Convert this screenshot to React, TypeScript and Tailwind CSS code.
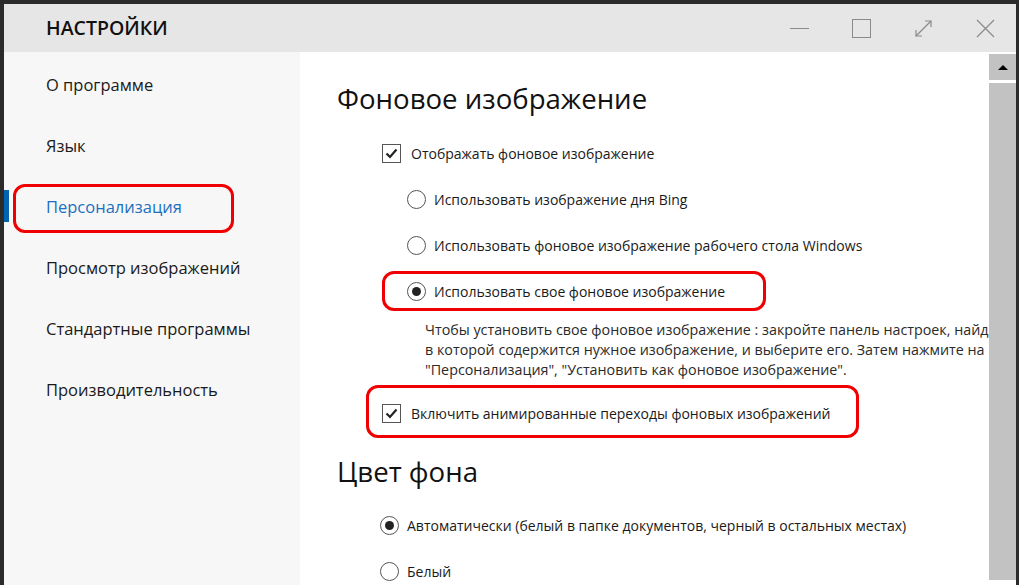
import React from "react";

const Check = () => (
  <div className="w-[19px] h-[19px] border border-[#555] bg-white flex items-center justify-center shrink-0">
    <svg width="13" height="11" viewBox="0 0 13 11">
      <path d="M1.5 5.5 L5 9 L11.5 1.5" fill="none" stroke="#222" strokeWidth="2.2" />
    </svg>
  </div>
);

const Radio = ({ on }: { on?: boolean }) => (
  <div className="w-[19px] h-[19px] rounded-full border border-[#555] bg-white flex items-center justify-center shrink-0">
    {on && <div className="w-[9px] h-[9px] rounded-full bg-[#222]" />}
  </div>
);

const sideItems = [
  "О программе",
  "Язык",
  "Персонализация",
  "Просмотр изображений",
  "Стандартные программы",
  "Производительность",
];

export default function App() {
  return (
    <div className="relative w-[1019px] h-[585px] overflow-hidden bg-[#2b2b2b] pt-[4px] pl-[4px] pr-[3px] flex flex-col font-['Open_Sans',sans-serif] text-[#1a1a1a]">
      {/* title bar */}
      <div className="h-[48px] bg-[#e6e6e6] flex items-center shrink-0">
        <div className="pl-[42px] text-[19.5px] font-semibold text-[#111] flex-1">НАСТРОЙКИ</div>
        <div className="flex h-full">
          <div className="w-[62px] flex items-center justify-center">
            <div className="w-[19px] h-[1px] bg-[#8a8a8a]" />
          </div>
          <div className="w-[62px] flex items-center justify-center">
            <div className="w-[19px] h-[19px] border border-[#8a8a8a]" />
          </div>
          <div className="w-[62px] flex items-center justify-center">
            <svg width="19" height="19" viewBox="0 0 19 19">
              <path d="M2 17 L17 2" stroke="#8a8a8a" strokeWidth="1.2" fill="none" />
              <path d="M11 2 L17 2 L17 8" stroke="#8a8a8a" strokeWidth="1.2" fill="none" />
              <path d="M2 11 L2 17 L8 17" stroke="#8a8a8a" strokeWidth="1.2" fill="none" />
            </svg>
          </div>
          <div className="w-[62px] flex items-center justify-center">
            <svg width="19" height="19" viewBox="0 0 19 19">
              <path d="M1 1 L18 18 M18 1 L1 18" stroke="#8a8a8a" strokeWidth="1.2" fill="none" />
            </svg>
          </div>
        </div>
      </div>

      {/* body */}
      <div className="flex flex-1 min-h-0">
        {/* sidebar */}
        <div className="w-[296px] bg-[#f7f7f7] pt-[3px] shrink-0">
          {sideItems.map((t, i) => (
            <div key={t} className="relative h-[61px] flex items-center pl-[42px] text-[16.5px]">
              {i === 2 && <div className="absolute left-0 top-[13px] w-[5px] h-[32px] bg-[#0063b1]" />}
              <span className={i === 2 ? "text-[#1d6fbf]" : "text-[#1a1a1a]"}>{t}</span>
            </div>
          ))}
        </div>

        {/* content */}
        <div className="flex-1 bg-white overflow-hidden pl-[37px]">
          <div className="w-[900px]">
            <div className="mt-[28px] h-[38px] flex items-center text-[27.6px] text-[#111]">Фоновое изображение</div>
            <div className="mt-[13px] h-[45px] flex items-center pl-[45px] gap-[10px] text-[14px]">
              <Check />
              <span>Отображать фоновое изображение</span>
            </div>
            <div className="h-[46px] flex items-center pl-[70px] gap-[8px] text-[14px]">
              <Radio />
              <span>Использовать изображение дня Bing</span>
            </div>
            <div className="h-[46px] flex items-center pl-[70px] gap-[8px] text-[14px]">
              <Radio />
              <span>Использовать фоновое изображение рабочего стола Windows</span>
            </div>
            <div className="h-[46px] flex items-center pl-[70px] gap-[8px] text-[14px]">
              <Radio on />
              <span>Использовать свое фоновое изображение</span>
            </div>
            <div className="mt-[6px] pl-[88px] text-[14.3px] leading-[20px] text-[#2a2a2a] whitespace-nowrap">
              <div>Чтобы установить свое фоновое изображение : закройте панель настроек, найдите папку,</div>
              <div>в которой содержится нужное изображение, и выберите его. Затем нажмите на</div>
              <div>"Персонализация", "Установить как фоновое изображение".</div>
            </div>
            <div className="mt-[10px] h-[46px] flex items-center pl-[45px] gap-[10px] text-[14px]">
              <Check />
              <span>Включить анимированные переходы фоновых изображений</span>
            </div>
            <div className="mt-[17px] h-[38px] flex items-center text-[27.6px] text-[#111]">Цвет фона</div>
            <div className="mt-[11px] h-[46px] flex items-center pl-[43px] gap-[8px] text-[14px]">
              <Radio on />
              <span>Автоматически (белый в папке документов, черный в остальных местах)</span>
            </div>
            <div className="h-[46px] flex items-center pl-[43px] gap-[8px] text-[14px]">
              <Radio />
              <span>Белый</span>
            </div>
          </div>
        </div>

        {/* scrollbar */}
        <div className="w-[27px] bg-white flex flex-col shrink-0">
          <div className="mt-[2px] h-[26px] bg-[#c2c2c2] flex items-center justify-center">
            <div className="w-0 h-0 border-l-[5px] border-r-[5px] border-b-[5px] border-l-transparent border-r-transparent border-b-black" />
          </div>
          <div className="mt-[3px] flex-1 mb-[5px] bg-[#c2c2c2]" />
        </div>
      </div>

      {/* red annotations */}
      <div className="absolute left-[13px] top-[184px] w-[221px] h-[49px] border-[3px] border-[#f00000] rounded-[12px]" />
      <div className="absolute left-[382px] top-[271px] w-[384px] h-[40px] border-[3px] border-[#f00000] rounded-[12px]" />
      <div className="absolute left-[366px] top-[385px] w-[493px] h-[53px] border-[3px] border-[#f00000] rounded-[12px]" />
    </div>
  );
}
